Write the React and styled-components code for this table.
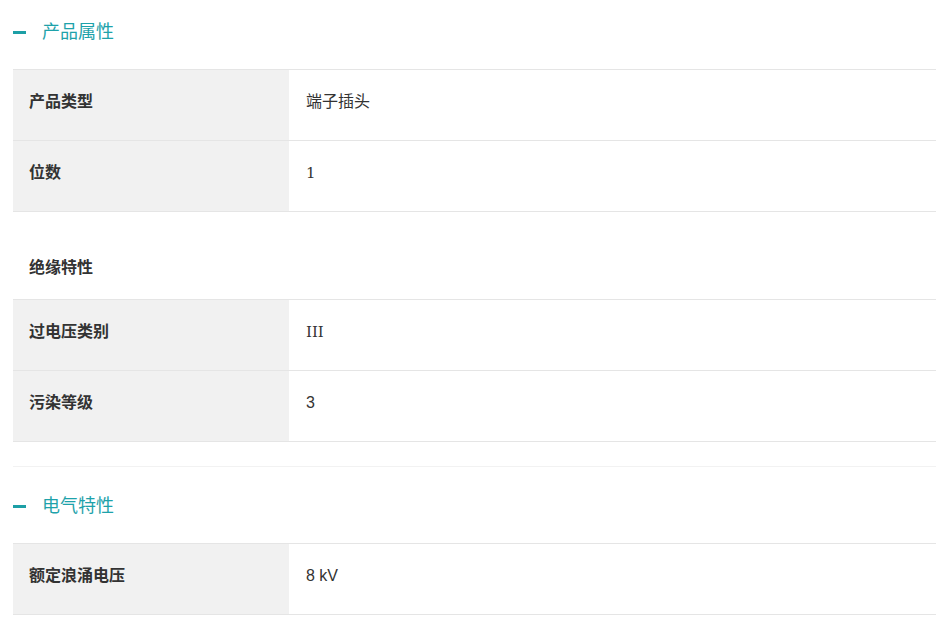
import styled, { createGlobalStyle } from "styled-components"

const sections = [
  {
    title: "产品属性",
    groups: [
      {
        rows: [
          { label: "产品类型", value: "端子插头" },
          { label: "位数", value: "1", serif: true },
        ],
      },
      {
        heading: "绝缘特性",
        rows: [
          { label: "过电压类别", value: "III", serif: true },
          { label: "污染等级", value: "3" },
        ],
      },
    ],
  },
  {
    title: "电气特性",
    groups: [
      {
        rows: [{ label: "额定浪涌电压", value: "8 kV" }],
      },
    ],
  },
]

// CJK glyphs sit a little low on the latin baseline, lift them
const isCjk = text => /[\u4e00-\u9fff]/.test(text)

export default function App(){

  return(
    <>
      <GlobalStyle/>
      <Page>
        {sections.map((s, i) => (
          <Section key={s.title} first={i === 0}>
            <SectionHead>
              <Dash/>
              <Title>{s.title}</Title>
            </SectionHead>
            {s.groups.map((g, j) => (
              <div key={j}>
                {g.heading && <SubHead>{g.heading}</SubHead>}
                <Table>
                  {g.rows.map(r => (
                    <Row key={r.label}>
                      <Label>{r.label}</Label>
                      <Value serif={r.serif} cjk={isCjk(r.value)}>{r.value}</Value>
                    </Row>
                  ))}
                </Table>
              </div>
            ))}
          </Section>
        ))}
      </Page>
    </>
  )
}

const GlobalStyle = createGlobalStyle`
  body {
    margin: 0;
    background: #fff;
    font-family: "Liberation Sans", "Noto Sans CJK SC", sans-serif;
    color: #333;
  }
`

const Page = styled.div`
  padding: 0 12px 0 13px;
`

const Section = styled.section`
  ${({first}) => first ? "" : `
    margin-top: 24px;
    padding-top: 7px;
    border-top: 1px solid #f2f2f2;
  `}
`

const SectionHead = styled.div`
  display: flex;
  align-items: center;
  height: 62px;
  padding: 1px 0 6px;
`

const Dash = styled.span`
  display: block;
  width: 13px;
  height: 3px;
  background: #1d9fa6;
  margin-right: 16px;
`

const Title = styled.span`
  font-size: 18px;
  color: #1ea2aa;
  line-height: 1;
`

const SubHead = styled.div`
  display: flex;
  align-items: flex-end;
  height: 87px;
  box-sizing: border-box;
  padding: 0 0 21px 16px;
  font-size: 16px;
  font-weight: 700;
  color: #333;
`

const Table = styled.div`
  border-top: 1px solid #e5e5e5;
`

const Row = styled.div`
  display: grid;
  grid-template-columns: 276px 1fr;
  height: 71px;
  box-sizing: border-box;
  border-bottom: 1px solid #e5e5e5;
`

const Cell = styled.div`
  display: flex;
  align-items: center;
  padding-bottom: 7px;
`

const Label = styled(Cell)`
  padding-left: 16px;
  padding-bottom: 11px;
  background: #f1f1f1;
  font-size: 16px;
  font-weight: 700;
  color: #333;
`

const Value = styled(Cell)`
  padding-left: 17px;
  padding-bottom: ${({cjk}) => cjk ? "11px" : "7px"};
  font-size: ${({serif}) => serif ? "15px" : "16px"};
  color: #333;
  font-family: ${({serif}) => serif
    ? `"DejaVu Serif", "Noto Sans CJK SC", serif`
    : `"Liberation Sans", "Noto Sans CJK SC", sans-serif`};
`
